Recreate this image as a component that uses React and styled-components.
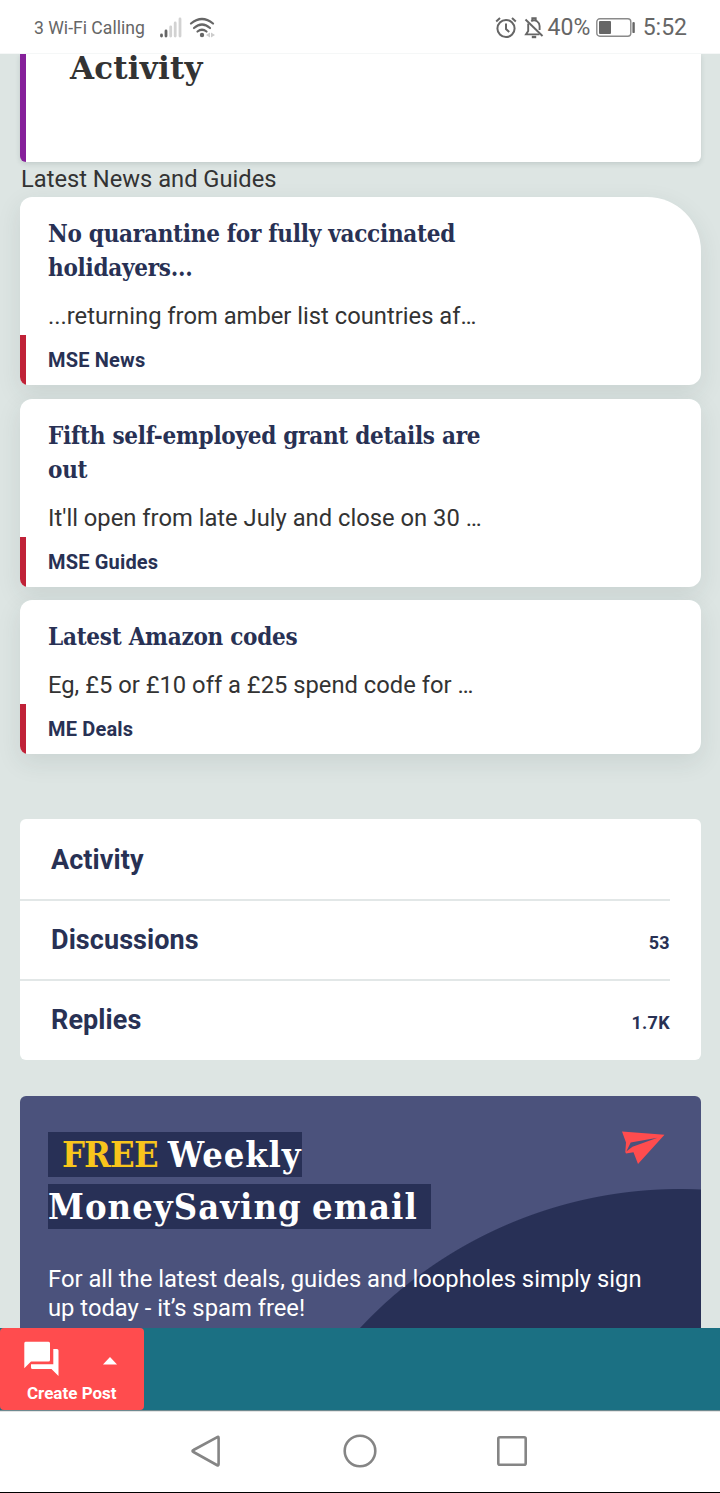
import React from 'react';
import styled, { createGlobalStyle } from 'styled-components';

const slab = "'DejaVu Serif Condensed', 'DejaVu Serif', serif";
const wideSlab = "'DejaVu Serif', serif";
const navy = '#283154';

const Global = createGlobalStyle`
  *, *::before, *::after { box-sizing: border-box; }
  body { margin: 0; background: #dde5e3; font-family: Roboto, sans-serif; color: #333; }
  h1, h2, h3, p { margin: 0; }
`;

const Screen = styled.div`
  width: 720px;
  height: 1493px;
  display: flex;
  flex-direction: column;
  overflow: hidden;
`;

const StatusBar = styled.header`
  flex: none;
  height: 54px;
  display: flex;
  align-items: center;
  justify-content: space-between;
  padding: 3px 33px 0 34px;
  background: #fff;
  border-bottom: 1px solid #f5f7f7;
  color: #666;
  svg { display: block; flex: none; }
`;

const StatusLeft = styled.div`
  display: flex;
  align-items: center;
  gap: 7px;
`;

const Carrier = styled.span`
  width: 115px;
  font-size: 17.6px;
  line-height: 24px;
  white-space: nowrap;
`;

const StatusRight = styled.div`
  display: flex;
  align-items: center;
  gap: 6.2px;
`;

const StatusText = styled.span`
  font-size: 23px;
  line-height: 28px;
`;

const BellText = styled.span`
  display: flex;
  align-items: center;
  gap: 4px;
`;

const Page = styled.main`
  flex: 1;
  min-height: 0;
  overflow: hidden;
  padding: 0 19px 0 20px;
`;

const ProfileCard = styled.section`
  height: 108px;
  padding-left: 44px;
  background: #fff;
  border-left: 6px solid #86209a;
  border-radius: 0 0 6px 6px;
  box-shadow: 0 2px 5px rgba(40, 60, 60, 0.15);
`;

const ProfileTitle = styled.h1`
  font: 700 31px/29px ${wideSlab};
  letter-spacing: 0.2px;
`;

const SectionLabel = styled.p`
  height: 35px;
  padding: 1px 0 0 1px;
  font-size: 23.7px;
  line-height: 32px;
`;

const NewsList = styled.div`
  display: flex;
  flex-direction: column;
  gap: 13.5px;
`;

const NewsCard = styled.article`
  overflow: hidden;
  padding-top: 20px;
  background: #fff;
  border-radius: 12px ${p => (p.$feature ? '54px' : '12px')} 12px 8px;
  box-shadow: 0 8px 24px rgba(40, 60, 60, 0.1);
`;

const NewsTitle = styled.h2`
  width: 490px;
  padding-left: 28px;
  color: ${navy};
  font: 700 24px/34px ${slab};
  letter-spacing: -0.27px;
  white-space: pre-line;
`;

const NewsText = styled.p`
  margin: 16px 0 4px;
  padding-left: 28px;
  font-size: 23.75px;
  line-height: 30px;
  white-space: nowrap;
`;

const NewsTag = styled.div`
  height: 50px;
  padding-left: 22px;
  border-left: 6px solid #c02238;
  color: ${navy};
  font-size: 20px;
  font-weight: 700;
  letter-spacing: 0.18px;
  line-height: 50px;
`;

const Menu = styled.nav`
  margin-top: 65px;
  height: 241px;
  padding-right: 31px;
  background: #fff;
  border-radius: 6px;
`;

const MenuRow = styled.div`
  display: flex;
  justify-content: space-between;
  height: 80px;
  padding-left: 31px;
  border-top: 2px solid #e2e7e7;
  line-height: 78px;
  color: ${navy};
  font-size: 27px;
  font-weight: 700;
  letter-spacing: 0.08px;
  &:first-child { border-top-color: transparent; }
`;

const Count = styled.span`
  padding-top: 3px;
  font-size: 18px;
  letter-spacing: 0.3px;
`;

const Promo = styled.section`
  position: relative;
  margin-top: 36px;
  height: 300px;
  padding: 36px 28px 0;
  border-radius: 6px;
  background: radial-gradient(circle at 660px 531px, #283056 437.5px, #4b527c 438.5px);
  color: #fff;
`;

const PromoTitle = styled.h2`
  display: flex;
  flex-direction: column;
  align-items: flex-start;
  gap: 7px;
  font: 700 36px/45px ${slab};
  white-space: pre;
`;

const PromoLine = styled.span`
  height: 45px;
  width: ${p => p.$w}px;
  padding-left: ${p => p.$pad || 0}px;
  background: #283056;
  letter-spacing: ${p => p.$track};
  word-spacing: -2px;
`;

const Gold = styled.span`
  color: #f8c51c;
  letter-spacing: -0.9px;
`;

const PromoText = styled.p`
  margin-top: 36px;
  font-size: 23.77px;
  line-height: 29px;
  white-space: pre-line;
`;

const Plane = styled.svg`
  position: absolute;
  top: 34px;
  left: 601px;
`;

const ActionBar = styled.footer`
  flex: none;
  height: 83px;
  background: #1b7083;
  border-bottom: 1px solid #6e8a90;
`;

const CreateButton = styled.div`
  width: 144px;
  height: 82px;
  padding: 13px 27px 0 24px;
  background: #ff4c4e;
  border-radius: 4px;
  color: #fff;
`;

const CreateIcons = styled.div`
  display: flex;
  justify-content: space-between;
  height: 36px;
  svg { display: block; }
`;

const CreateLabel = styled.div`
  padding: 5px 0 0 3px;
  font-size: 17px;
  font-weight: 700;
  line-height: 22px;
  white-space: nowrap;
`;

const SystemNav = styled.div`
  flex: none;
  height: 82px;
  display: flex;
  justify-content: center;
  align-items: center;
  gap: 116px;
  padding-bottom: 2px;
  background: #fff;
  border-top: 1px solid #e4e4e4;
  border-bottom: 1px solid #000;
  svg { display: block; fill: none; stroke: #858585; stroke-width: 2.6; }
`;

const news = [
  { title: 'No quarantine for fully vaccinated\nholidayers...', text: '...returning from amber list countries af…', tag: 'MSE News', feature: true },
  { title: 'Fifth self-employed grant details are\nout', text: "It'll open from late July and close on 30 …", tag: 'MSE Guides' },
  { title: 'Latest Amazon codes', text: 'Eg, £5 or £10 off a £25 spend code for …', tag: 'ME Deals' },
];

const SignalIcon = () => (
  <svg width="26" height="22" viewBox="0 0 26 22">
    <g strokeWidth="2.8" strokeLinecap="round">
      <path d="M5.5 18v1M10 14v5" stroke="#666" />
      <path d="M14.7 10v9M19.2 6v13M24 2v17" stroke="#d2d2d2" />
    </g>
  </svg>
);

const WifiIcon = () => (
  <svg width="28" height="22" viewBox="0 0 28 22">
    <g fill="none" stroke="#666" strokeWidth="2.2" strokeLinecap="round">
      <path d="M2 6.5Q13 -2.5 24 6.5" />
      <path d="M5 11Q13 4 21 11" />
      <path d="M8.5 14.5Q13 11 17.5 14.5" />
    </g>
    <circle cx="13" cy="18" r="2.2" fill="#666" />
    <path d="M17 18l4-2.6v5.2zM26 18l-4-2.6v5.2z" fill="#ccc" />
  </svg>
);

const AlarmIcon = () => (
  <svg width="22" height="22" viewBox="0 0 22 22" fill="none" stroke="#666" strokeWidth="2">
    <circle cx="11" cy="11.5" r="8.6" />
    <path d="M11 6.5v5.5l3.2 3" />
    <path d="M1.2 4.5L5 1.1M20.8 4.5L17 1.1" />
  </svg>
);

const BellOffIcon = () => (
  <svg width="20" height="22" viewBox="0 0 20 22" fill="none" stroke="#666" strokeWidth="1.9">
    <path d="M1.5 2.5L18.5 19" />
    <path d="M4.2 6.5V14L2 17.4H15.5M7.2 4.2Q10 2.2 13 4.2Q15.6 6 15.6 9V13" />
    <path d="M8.3 3V1.2h3.4V3" />
    <path d="M7.8 20h4.4" strokeWidth="2.4" />
  </svg>
);

const BatteryIcon = () => (
  <svg width="40" height="20" viewBox="0 0 40 20">
    <rect x="0.8" y="0.8" width="34" height="17.4" rx="3" fill="none" stroke="#8a8a8a" strokeWidth="1.4" />
    <rect x="3" y="3.1" width="12" height="12.8" rx="1" fill="#666" />
    <rect x="36.4" y="3.9" width="2.4" height="11.2" rx="1.2" fill="#666" />
  </svg>
);

export default function App() {
  return (
    <>
      <Global />
      <Screen>
        <StatusBar>
          <StatusLeft>
            <Carrier>3 Wi-Fi Calling</Carrier>
            <SignalIcon />
            <WifiIcon />
          </StatusLeft>
          <StatusRight>
            <AlarmIcon />
            <BellText>
              <BellOffIcon />
              <StatusText>40%</StatusText>
            </BellText>
            <BatteryIcon />
            <StatusText>5:52</StatusText>
          </StatusRight>
        </StatusBar>
        <Page>
          <ProfileCard>
            <ProfileTitle>Activity</ProfileTitle>
          </ProfileCard>
          <SectionLabel>Latest News and Guides</SectionLabel>
          <NewsList>
            {news.map(n => (
              <NewsCard key={n.tag} $feature={n.feature}>
                <NewsTitle>{n.title}</NewsTitle>
                <NewsText>{n.text}</NewsText>
                <NewsTag>{n.tag}</NewsTag>
              </NewsCard>
            ))}
          </NewsList>
          <Menu>
            <MenuRow>Activity</MenuRow>
            <MenuRow>Discussions<Count>53</Count></MenuRow>
            <MenuRow>Replies<Count>1.7K</Count></MenuRow>
          </Menu>
          <Promo>
            <PromoTitle>
              <PromoLine $w={254} $pad={14} $track="0.9px"><Gold>FREE</Gold> Weekly</PromoLine>
              <PromoLine $w={383} $track="1.05px">MoneySaving email</PromoLine>
            </PromoTitle>
            <PromoText>{'For all the latest deals, guides and loopholes simply sign\nup today - it’s spam free!'}</PromoText>
            <Plane width="45" height="36" viewBox="0 0 45 36" fill="#ff4c4e">
              <path d="M1 1.5L43.5 4.8L17 34L12.5 22.3L5 23.5L4.3 22L5 12.5Z" />
              <path d="M36.5 7.7L9.7 12.5L5.3 21.5L11.5 16.8Z" fill="#4b527c" />
            </Plane>
          </Promo>
        </Page>
        <ActionBar>
          <CreateButton>
            <CreateIcons>
              <svg width="36" height="36" viewBox="0 0 36 36" fill="#fff">
                <path d="M1.5 0.8H24.5Q26 0.8 26 2.3V19Q26 20.5 24.500 20.5H7L0.300 27.2V2.300Q0.300 0.800 1.500 0.800Z" />
                <path d="M29.300 8H33Q34.500 8 34.500 9.500V35L27.500 28H8.500Q7 28 7 26.500V23.200H29.300Z" />
              </svg>
              <svg width="14" height="36" viewBox="0 0 14 36" fill="#fff">
                <path d="M0 23.500L7 16L14 23.500Z" />
              </svg>
            </CreateIcons>
            <CreateLabel>Create Post</CreateLabel>
          </CreateButton>
        </ActionBar>
        <SystemNav>
          <svg width="36" height="36" viewBox="0 0 36 36"><path d="M26.800 4.500Q28.600 3 28.600 5V31Q28.600 33 26.800 32L3.500 19Q1.500 18 3.500 17Z" /></svg>
          <svg width="36" height="36" viewBox="0 0 36 36"><circle cx="18" cy="18" r="15.300" /></svg>
          <svg width="36" height="36" viewBox="0 0 36 36"><rect x="4.300" y="4.300" width="27.400" height="27.400" rx="1.500" /></svg>
        </SystemNav>
      </Screen>
    </>
  );
}
